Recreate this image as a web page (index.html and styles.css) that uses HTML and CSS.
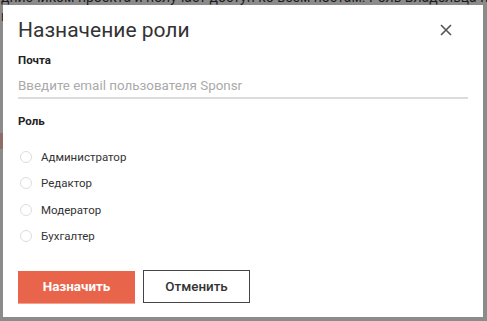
FILE: index.html
```html
<!DOCTYPE html>
<html lang="ru">
<head>
    <meta charset="UTF-8">
    <meta name="viewport" content="width=device-width, initial-scale=1.0">
    <title>Назначение роли</title>
    <link rel="stylesheet" href="styles.css">
</head>
<body>
    <div class="page">
        <p class="page-text">дписчиком проекта и получает доступ ко всем постам. Роль Владельца проекта</p>
        <p class="page-text">назначается автоматически</p>
        <div class="page-button"></div>
    </div>

    <div class="modal">
        <div class="modal-head">
            <h1 class="modal-title">Назначение роли</h1>
            <button class="close" type="button" aria-label="Закрыть">
                <svg width="12" height="12" viewBox="0 0 12 12">
                    <path d="M1 1L11 11M11 1L1 11" stroke="#555" stroke-width="1.6" fill="none"/>
                </svg>
            </button>
        </div>

        <label class="field-label">Почта</label>
        <input class="field-input" type="text" placeholder="Введите email пользователя Sponsr">

        <div class="field-label role-label">Роль</div>
        <div class="roles">
            <label class="role"><span class="radio"></span>Администратор</label>
            <label class="role"><span class="radio"></span>Редактор</label>
            <label class="role"><span class="radio"></span>Модератор</label>
            <label class="role"><span class="radio"></span>Бухгалтер</label>
        </div>

        <div class="actions">
            <button class="btn btn-primary" type="button">Назначить</button>
            <button class="btn btn-outline" type="button">Отменить</button>
        </div>
    </div>
</body>
</html>
```

FILE: styles.css
```css
*{
    margin: 0;
    padding: 0;
    box-sizing: border-box;
}
html, body{
    height: 100%;
}
body{
    font-family: Roboto, "Noto Sans", sans-serif;
    background: #8b8b8b;
    overflow: hidden;
    position: relative;
}
.page{
    height: 100%;
    overflow: hidden;
}
.page-text{
    font-size: 14px;
    line-height: 19px;
    color: #1c1c1c;
    white-space: nowrap;
    margin-top: -12px;
    margin-left: 1px;
}
.page-text + .page-text{
    margin-top: 0;
}
.page-button{
    margin-top: 107px;
    width: 40px;
    height: 16px;
    background: #8f6d66;
}
.modal{
    position: absolute;
    left: 3px;
    top: 5px;
    width: 480px;
    height: 312px;
    background: #fff;
    padding: 0 15px;
}
.modal-head{
    display: flex;
    justify-content: space-between;
    align-items: center;
    height: 48px;
}
.modal-title{
    font-size: 21px;
    font-weight: 400;
    color: #333;
    padding-top: 1px;
}
.close{
    border: 0;
    background: none;
    width: 16px;
    height: 16px;
    display: flex;
    align-items: center;
    justify-content: center;
    margin-right: 14px;
    margin-top: 1px;
}
.field-label{
    display: block;
    font-size: 11.5px;
    font-weight: 700;
    color: #222;
}
.field-input{
    display: block;
    width: 450px;
    border: 0;
    border-bottom: 2px solid #dcdcdc;
    font-family: inherit;
    font-size: 13.4px;
    color: #333;
    padding: 11px 0 4px;
    outline: none;
}
.field-input::placeholder{
    color: #aaa;
}
.role-label{
    margin-top: 15px;
}
.roles{
    display: flex;
    flex-direction: column;
    gap: 13.67px;
    margin-top: 22px;
    padding-left: 2px;
}
.role{
    display: flex;
    align-items: center;
    font-size: 11.5px;
    color: #333;
    height: 13px;
}
.radio{
    width: 12px;
    height: 12px;
    border: 1px solid #ddd;
    border-radius: 50%;
    margin-right: 9px;
}
.actions{
    display: flex;
    gap: 8px;
    margin-top: 28px;
}
.btn{
    font-family: inherit;
    font-size: 13.4px;
    font-weight: 700;
    height: 33px;
}
.btn-primary{
    width: 117px;
    background: #e8644a;
    color: #fff;
    border: 0;
    border-bottom: 1px solid #f4a08c;
}
.btn-outline{
    width: 107px;
    background: #fff;
    color: #333;
    border: 1px solid #444;
    margin-top: -1px;
    font-weight: 500;
}
```
